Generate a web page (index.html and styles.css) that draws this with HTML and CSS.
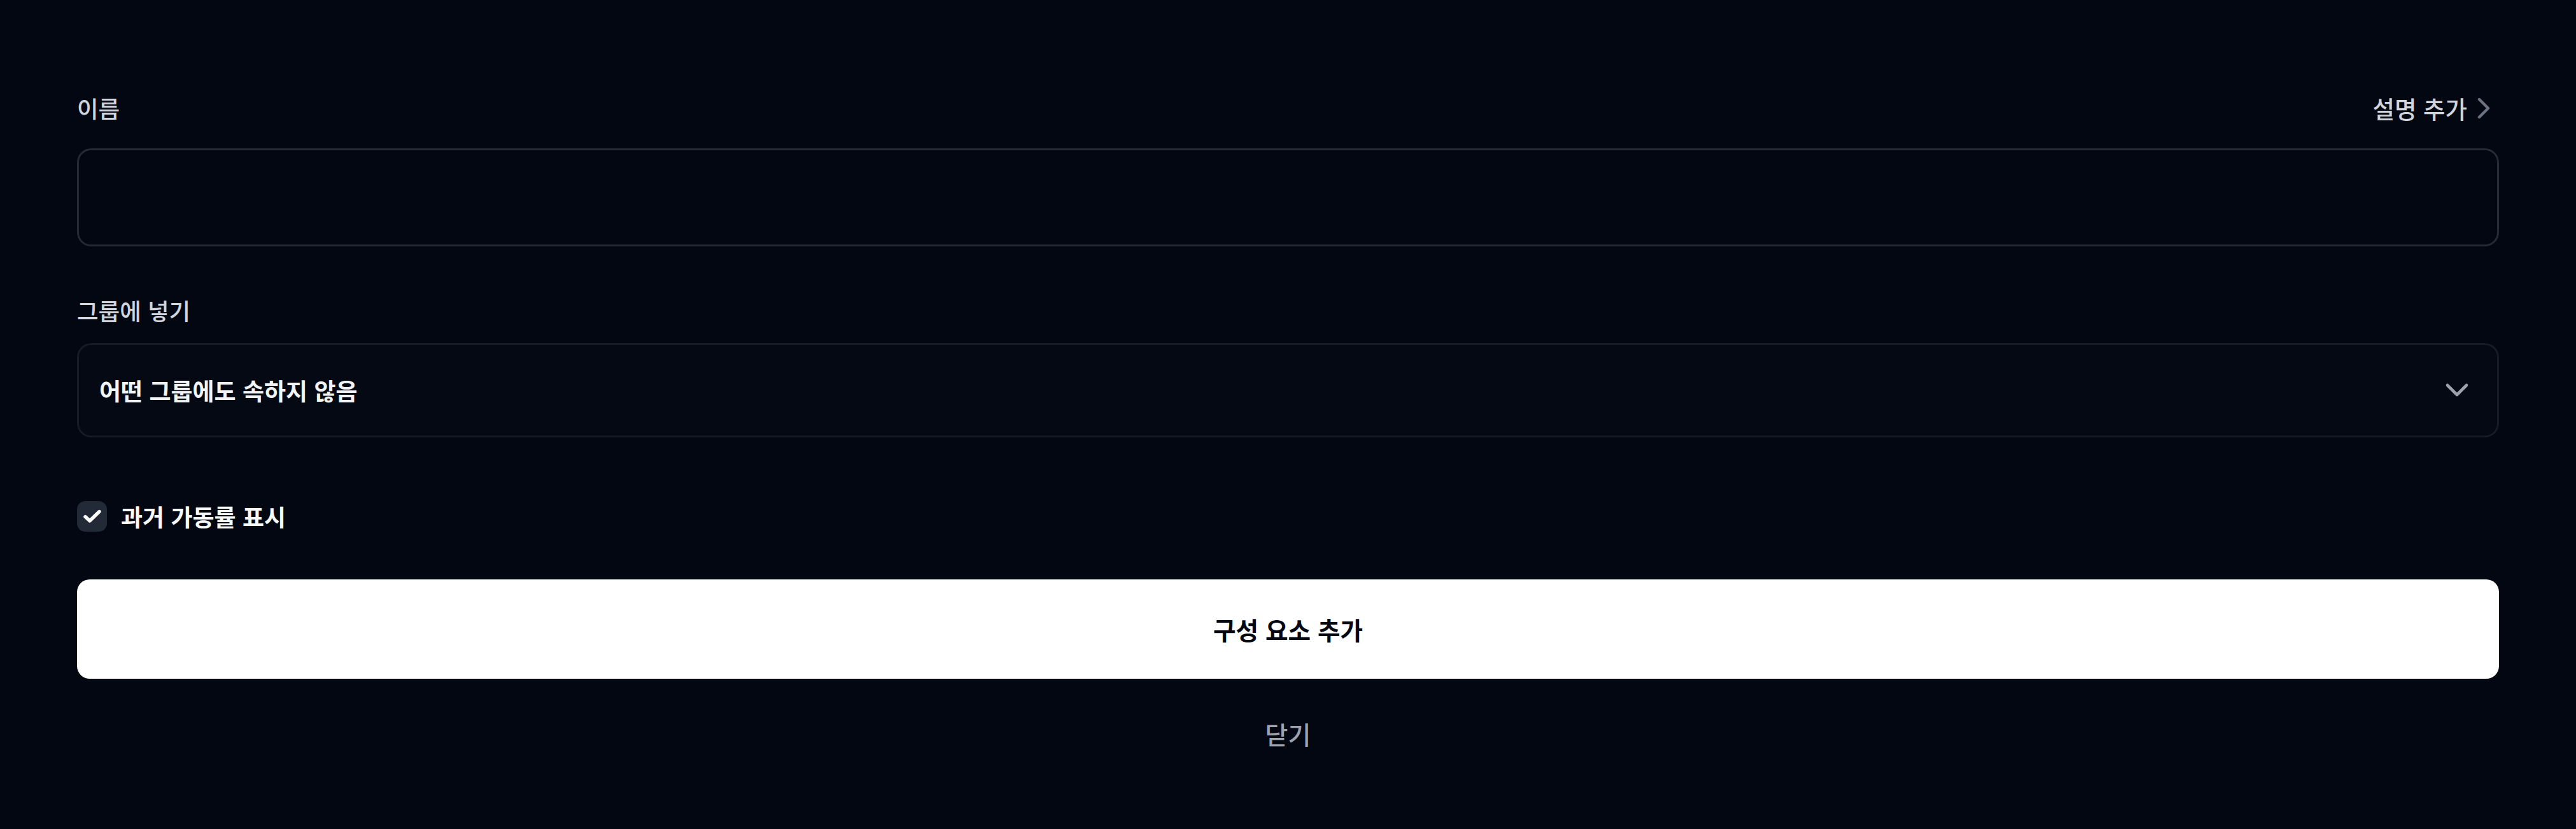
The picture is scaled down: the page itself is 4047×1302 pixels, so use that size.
FILE: index.html
```html
<!DOCTYPE html>
<html lang="ko">
<head>
<meta charset="utf-8">
<title>구성 요소 추가</title>
<link rel="stylesheet" href="styles.css">
</head>
<body>
<main class="form">
  <div class="label-row">
    <label class="label" for="name">이름</label>
    <button class="link-btn" type="button">
      <span>설명 추가</span>
      <svg class="chev-right" viewBox="0 0 22 34" width="22" height="34" aria-hidden="true"><polyline points="4,3 18,17 4,31" fill="none" stroke="#6b7280" stroke-width="4.4" stroke-linecap="round" stroke-linejoin="round"/></svg>
    </button>
  </div>
  <input id="name" class="text-input" type="text">

  <div class="label-row group-label">
    <span class="label">그룹에 넣기</span>
  </div>
  <div class="select">
    <span class="select-value">어떤 그룹에도 속하지 않음</span>
    <svg class="chev-down" viewBox="0 0 38 24" width="38" height="24" aria-hidden="true"><polyline points="4,4 19,19 34,4" fill="none" stroke="#9ca3af" stroke-width="4.6" stroke-linecap="round" stroke-linejoin="round"/></svg>
  </div>

  <div class="check-row">
    <span class="checkbox">
      <svg viewBox="0 0 30 24" width="30" height="24" aria-hidden="true"><polyline points="4,12.5 11,19 26,4.5" fill="none" stroke="#ffffff" stroke-width="5.4" stroke-linecap="round" stroke-linejoin="round"/></svg>
    </span>
    <span class="check-label">과거 가동률 표시</span>
  </div>

  <button class="primary" type="button">구성 요소 추가</button>
  <button class="close" type="button">닫기</button>
</main>
</body>
</html>
```

FILE: styles.css
```css
* { box-sizing: border-box; }

html, body {
  margin: 0;
  padding: 0;
  background: #030712;
  height: 100%;
}

body {
  font-family: "Noto Sans CJK KR", "Noto Sans", sans-serif;
  color: #d1d5db;
}

.form {
  display: flex;
  flex-direction: column;
  padding: 144px 121px 0 121px;
}

.label-row {
  display: flex;
  align-items: center;
  justify-content: space-between;
  height: 52px;
}

.label {
  font-size: 36.5px;
  line-height: 52px;
  font-weight: 500;
  color: #d1d5db;
}

.link-btn {
  display: flex;
  align-items: center;
  gap: 15px;
  background: none;
  border: none;
  padding: 0;
  margin-right: 13px;
  font-family: inherit;
  font-size: 37.5px;
  line-height: 52px;
  font-weight: 500;
  color: #d1d5db;
}

.chev-right { display: block; }

.text-input {
  margin-top: 37px;
  height: 154px;
  width: 100%;
  background: #030712;
  border: 3px solid #242a36;
  border-radius: 22px;
  font-family: inherit;
  font-size: 36px;
  color: #f3f4f6;
  padding: 0 33px;
  outline: none;
}

.group-label {
  margin-top: 75px;
}

.select {
  margin-top: 25px;
  height: 148px;
  display: flex;
  align-items: center;
  justify-content: space-between;
  background: #050914;
  border: 3px solid #161b26;
  border-radius: 22px;
  padding: 0 44px 0 32px;
}

.select-value {
  font-size: 37px;
  line-height: 52px;
  font-weight: 600;
  color: #f3f4f6;
}

.chev-down { display: block; }

.check-row {
  margin-top: 100px;
  display: flex;
  align-items: center;
  gap: 22px;
  height: 48px;
}

.checkbox {
  width: 47px;
  height: 48px;
  border-radius: 13px;
  background: #222a38;
  display: flex;
  align-items: center;
  justify-content: center;
}

.checkbox svg { display: block; }

.check-label {
  font-size: 37px;
  line-height: 52px;
  font-weight: 600;
  color: #f9fafb;
}

.primary {
  margin-top: 75px;
  height: 156px;
  width: 100%;
  background: #ffffff;
  border: none;
  border-radius: 20px;
  font-family: inherit;
  font-size: 38.7px;
  font-weight: 700;
  color: #030712;
}

.close {
  margin-top: 60px;
  align-self: center;
  background: none;
  border: none;
  padding: 0;
  font-family: inherit;
  font-size: 39px;
  line-height: 52px;
  font-weight: 500;
  color: #9ca3af;
}
```
